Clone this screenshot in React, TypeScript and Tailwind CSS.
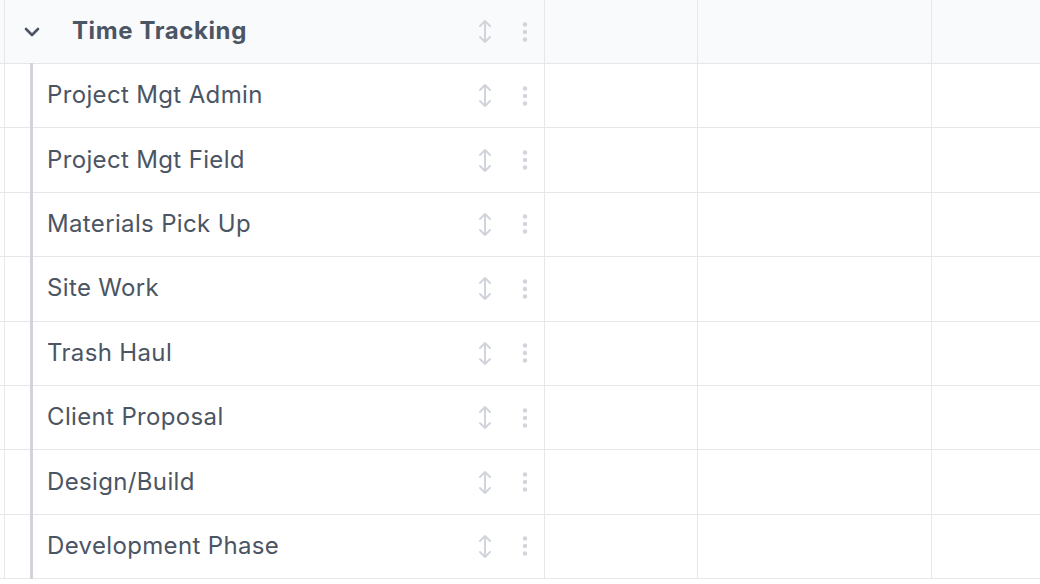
import React from "react";

const ROWS = [
  "Project Mgt Admin",
  "Project Mgt Field",
  "Materials Pick Up",
  "Site Work",
  "Trash Haul",
  "Client Proposal",
  "Design/Build",
  "Development Phase",
];

function MoveIcon() {
  return (
    <svg width="16" height="25" viewBox="0 0 16 25" fill="none" className="text-[#d1d5db]">
      <path
        d="M8 2v21M3 7l5-5 5 5M3 18l5 5 5-5"
        stroke="currentColor"
        strokeWidth="2"
        strokeLinecap="round"
        strokeLinejoin="round"
      />
    </svg>
  );
}

function DotsIcon() {
  return (
    <svg width="6" height="20" viewBox="0 0 6 20" className="text-[#d1d5db]">
      <circle cx="3" cy="2.5" r="2.2" fill="currentColor" />
      <circle cx="3" cy="10" r="2.2" fill="currentColor" />
      <circle cx="3" cy="17.5" r="2.2" fill="currentColor" />
    </svg>
  );
}

function Actions() {
  return (
    <div className="flex items-center gap-[29px] pr-[16px]">
      <MoveIcon />
      <DotsIcon />
    </div>
  );
}

function EmptyCells() {
  return (
    <>
      <div className="w-[153px] shrink-0 border-r border-[#e5e7eb]" />
      <div className="w-[234px] shrink-0 border-r border-[#e5e7eb]" />
      <div className="flex-1" />
    </>
  );
}

export default function App() {
  return (
    <div
      className="w-[1040px] h-[584px] overflow-hidden bg-white text-[#4b5563]"
      style={{ fontFamily: "Inter, 'Liberation Sans', sans-serif" }}
    >
      <div className="flex h-[64px] border-b border-[#e5e7eb] bg-[#f9fafb]">
        <div className="w-[5px] shrink-0 border-r border-[#e5e7eb]" />
        <div className="w-[540px] shrink-0 flex items-center justify-between border-r border-[#e5e7eb]">
          <div className="flex items-center">
            <svg width="16" height="10" viewBox="0 0 16 10" fill="none" className="ml-[19px] text-[#4b5563]">
              <path d="M2 2l6 6 6-6" stroke="currentColor" strokeWidth="2.6" strokeLinecap="round" strokeLinejoin="round" />
            </svg>
            <span className="ml-[32px] -mt-[2px] text-[24px] font-bold tracking-[0.6px]">Time Tracking</span>
          </div>
          <Actions />
        </div>
        <EmptyCells />
      </div>
      {ROWS.map((name) => (
        <div key={name} className="flex h-[64.4px] border-b border-[#e5e7eb]">
          <div className="w-[5px] shrink-0 border-r border-[#e5e7eb]" />
          <div className="w-[540px] shrink-0 flex items-center border-r border-[#e5e7eb]">
            <div className="ml-[25px] w-[3px] self-stretch -my-px bg-[#d1d5db]" />
            <div className="flex-1 flex items-center justify-between">
              <span className="ml-[14px] -mt-[1px] text-[24px] tracking-[0.35px]">{name}</span>
              <Actions />
            </div>
          </div>
          <EmptyCells />
        </div>
      ))}
    </div>
  );
}
